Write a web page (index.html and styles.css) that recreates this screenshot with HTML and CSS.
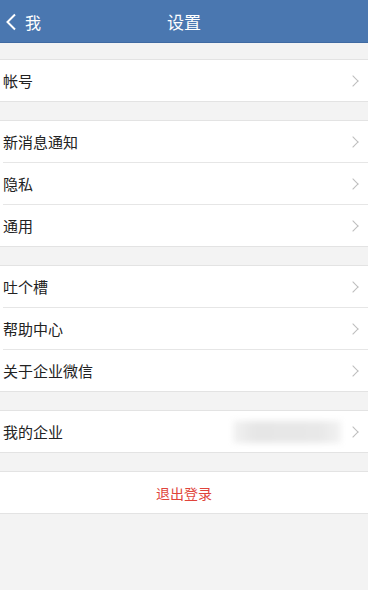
FILE: index.html
```html
<!DOCTYPE html>
<html lang="zh">
<head>
<meta charset="utf-8">
<link rel="stylesheet" href="styles.css">
</head>
<body>
<div class="app">
  <header class="nav">
    <div class="back">
      <svg class="back-icon" width="12" height="18" viewBox="0 0 12 18"><path d="M10 1.5 L2.5 9 L10 16.5" fill="none" stroke="#fff" stroke-width="2"/></svg>
      <span class="back-text">我</span>
    </div>
    <div class="title">设置</div>
  </header>

  <section class="group first">
    <div class="row"><span class="label">帐号</span><span class="chev"></span></div>
  </section>

  <section class="group">
    <div class="row"><span class="label">新消息通知</span><span class="chev"></span></div>
    <div class="row"><span class="label">隐私</span><span class="chev"></span></div>
    <div class="row"><span class="label">通用</span><span class="chev"></span></div>
  </section>

  <section class="group">
    <div class="row"><span class="label">吐个槽</span><span class="chev"></span></div>
    <div class="row"><span class="label">帮助中心</span><span class="chev"></span></div>
    <div class="row"><span class="label">关于企业微信</span><span class="chev"></span></div>
  </section>

  <section class="group">
    <div class="row"><span class="label">我的企业</span><span class="blur"></span><span class="chev"></span></div>
  </section>

  <section class="group">
    <div class="row logout">退出登录</div>
  </section>
</div>
</body>
</html>
```

FILE: styles.css
```css
html, body {
  margin: 0;
  padding: 0;
  background: #f3f3f3;
}
body {
  font-family: "Noto Sans CJK SC", "Noto Sans", sans-serif;
  width: 368px;
  height: 590px;
  overflow: hidden;
}
.nav {
  height: 43px;
  background: #4a77b0;
  position: relative;
  display: flex;
  align-items: center;
  justify-content: center;
  border-bottom: 1px solid #3f6aa2;
  box-sizing: border-box;
}
.back {
  position: absolute;
  left: 5px;
  top: 0;
  height: 43px;
  display: flex;
  align-items: center;
  gap: 8px;
}
.back-icon { display: block; }
.back-text {
  color: #fff;
  font-size: 16px;
  line-height: 1;
}
.title {
  color: #fff;
  font-size: 17px;
  line-height: 1;
}
.group {
  margin-top: 18px;
  background: #fff;
  border-top: 1px solid #e3e3e3;
  border-bottom: 1px solid #e3e3e3;
}
.group.first { margin-top: 16px; }
.row {
  height: 41px;
  display: flex;
  align-items: center;
  padding-left: 3px;
  padding-right: 10px;
  position: relative;
}
.row + .row {
  border-top: 1px solid #e6e6e6;
  margin-left: 3px;
  padding-left: 0;
}
.label {
  flex: 1;
  font-size: 15px;
  line-height: 1;
  color: #222;
  padding-bottom: 1px;
}
.chev {
  width: 7px;
  height: 7px;
  border-top: 1.5px solid #bdbdbd;
  border-right: 1.5px solid #bdbdbd;
  transform: rotate(45deg);
  margin-right: 1px;
}
.blur {
  width: 108px;
  height: 22px;
  background: linear-gradient(to right, #f2f2f2 0%, #e6e6e6 20%, #e8e8e8 80%, #f2f2f2 100%);
  filter: blur(3px);
  margin-right: 8px;
}
.logout {
  justify-content: center;
  color: #e0443b;
  font-size: 14px;
  line-height: 1;
  padding: 0;
}
```
